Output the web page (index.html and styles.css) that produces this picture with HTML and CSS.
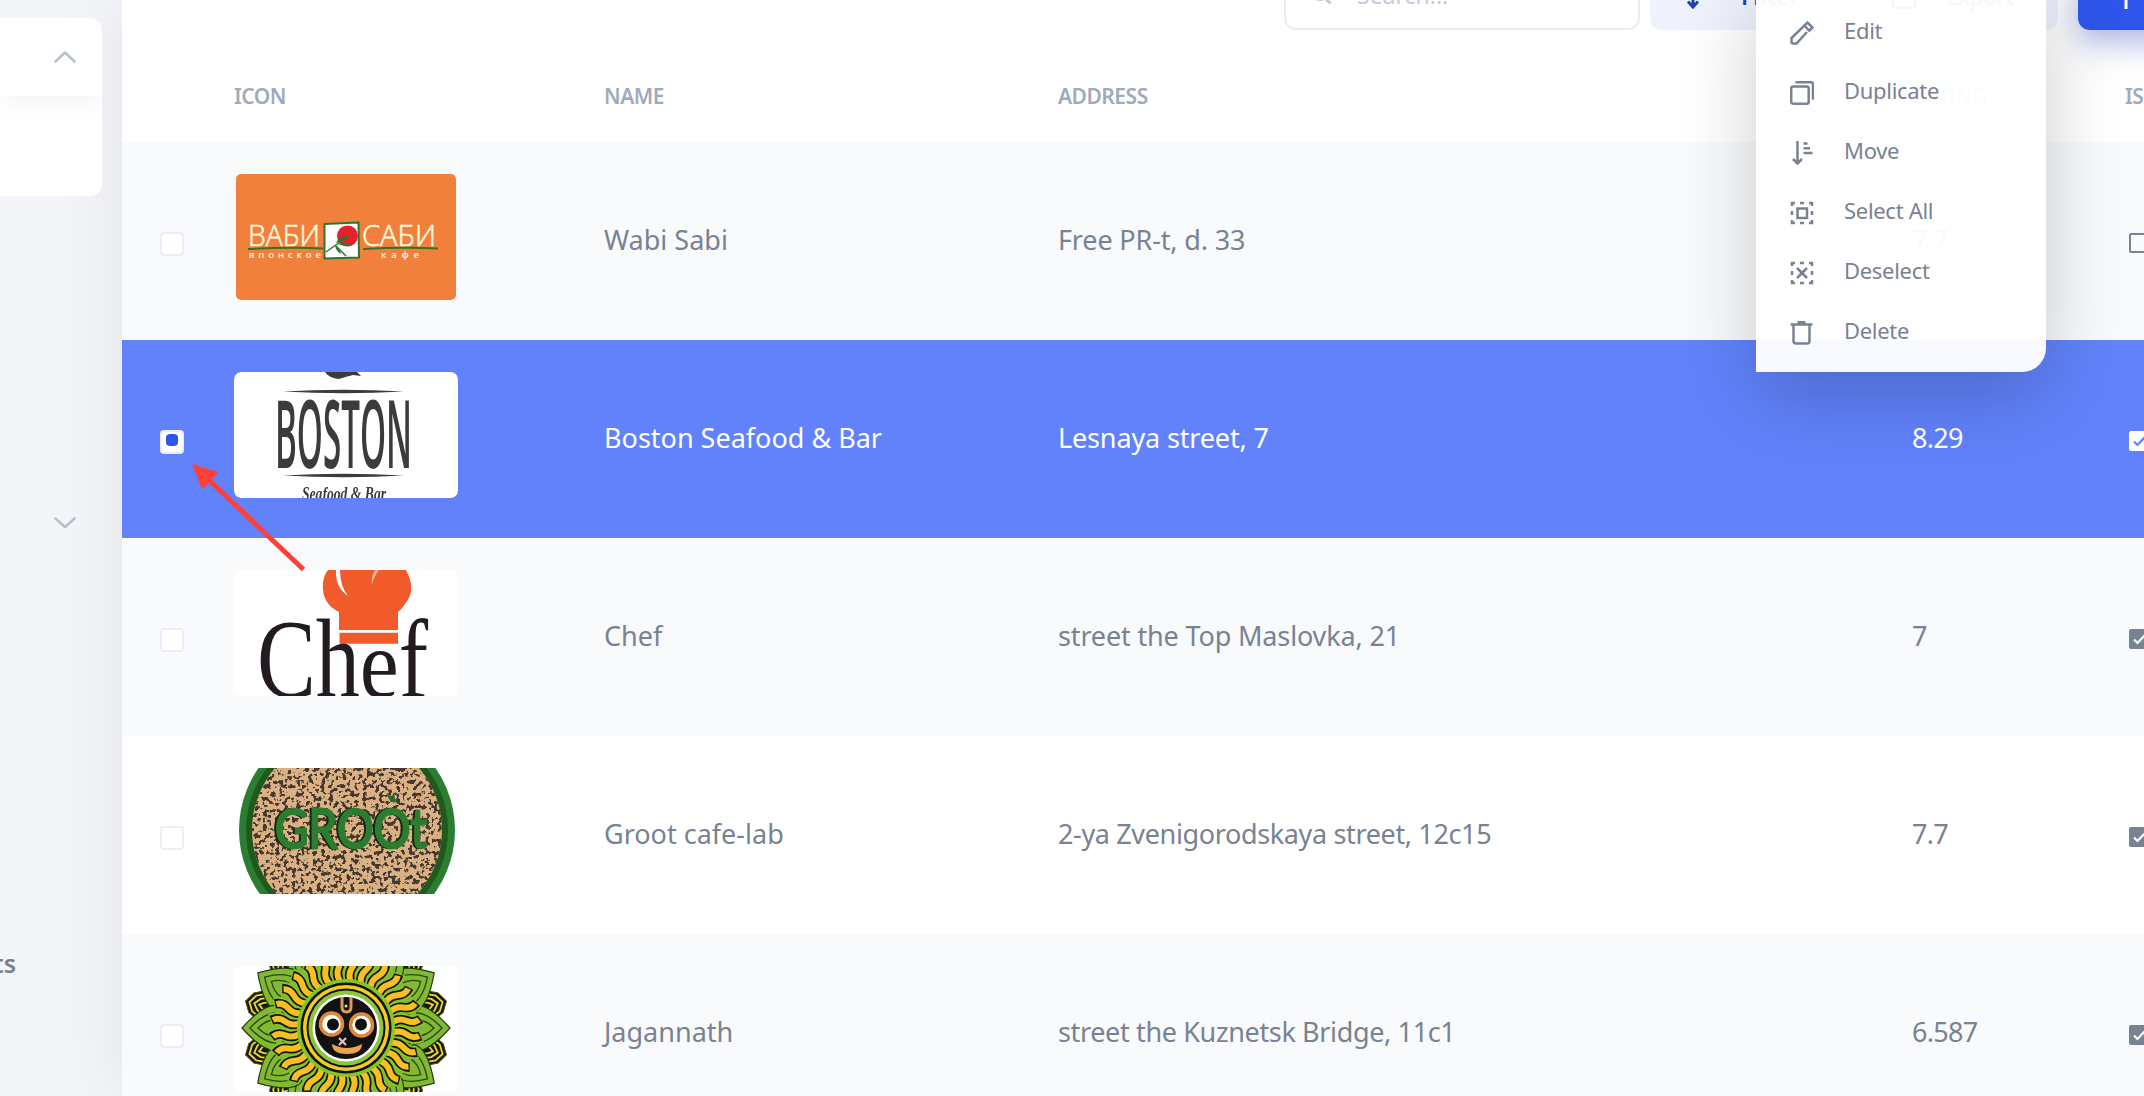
FILE: index.html
```html
<!DOCTYPE html>
<html lang="en">
<head>
<meta charset="utf-8">
<title>Restaurants</title>
<link rel="stylesheet" href="styles.css">
</head>
<body>
<svg class="defs" width="0" height="0" aria-hidden="true">
  <defs>
    <symbol id="check" viewBox="0 0 20 20"><rect width="20" height="20" rx="2" fill="currentColor"/><path d="M5 10.5l3.5 3.5 7-7.500" fill="none" stroke="var(--tick)" stroke-width="2.200"/></symbol>
    <filter id="soft"><feGaussianBlur stdDeviation=".55"/></filter>
    <filter id="grain" x="0" y="0" width="100%" height="100%">
      <feTurbulence type="fractalNoise" baseFrequency=".24" numOctaves="2" seed="8"/>
      <feColorMatrix values="0 0 0 0 .06  0 0 0 0 .04  0 0 0 0 .03  14 0 0 0 -7.300"/>
    </filter>
    <g id="leaf">
      <path d="M66-22Q80-27 104 0Q80 27 66 22L58 0z" fill="#84b832" stroke="#1e3d12" stroke-width="1.200"/>
      <path d="M70-15Q82-15 96 0Q82 15 70 15M72-8Q80-8 88 0Q80 8 72 8" fill="none" stroke="#1f4a14" stroke-width="1.300"/>
    </g>
    <g id="spike">
      <path d="M78-20L98-10L104 0L98 10L78 20z" fill="#161616" stroke="#4d4a10"/>
      <path d="M78-16L95-8L100 0L95 8L78 16M78-11L90-6L95 0L90 6L78 11M78-6L86-3L90 0L86 3L78 6" fill="none" stroke="#e8dc2c" stroke-width="1.800"/>
    </g>
    <g id="ray">
      <path d="M47 0Q54-4 61 0T76 0" fill="none" stroke="#86c42c" stroke-width="13"/>
      <path d="M47 0Q54-4 61 0T75 0" fill="none" stroke="#15170d" stroke-width="9.500"/>
      <path d="M47-.3Q54-4 61 0T73.500 .2" fill="none" stroke="#f8be22" stroke-width="6"/>
    </g>
  </defs>
</svg>

<div class="app">
  <aside class="sidebar">
    <section class="group">
      <div class="group-head"><svg width="22" height="12" viewBox="0 0 22 12"><path d="M1.500 10.500L11 1.500l9.500 9"/></svg></div>
    </section>
    <div class="group-closed"><svg width="22" height="12" viewBox="0 0 22 12"><path d="M1.500 1.500L11 10l9.500-8.500"/></svg></div>
    <div class="side-link">Restaurants</div>
  </aside>

  <main class="main">
    <header class="toolbar">
      <h1 class="title">Selected: 2 of 33</h1>
      <div class="search"><svg width="20" height="20" viewBox="0 0 20 20"><circle cx="8" cy="8" r="6.500"/><path d="M13 13l5.500 5.500"/></svg>Search...</div>
      <div class="btn filter"><svg width="14" height="26" viewBox="0 0 14 26"><path d="M7 0v24M2 18.500l5 5.500 5-5.500"/></svg>Filter</div>
      <div class="btn export"><svg width="26" height="26" viewBox="0 0 26 26"><rect x="1.500" y="1.500" width="23" height="23" rx="2"/></svg>Export</div>
      <div class="add"><svg width="22" height="22" viewBox="0 0 22 22"><path d="M11 0v22M0 11h22"/></svg></div>
    </header>

    <div class="row head"><span></span><span>ICON</span><span>NAME</span><span>ADDRESS</span><span>RATING</span><span>IS OPEN</span></div>

    <div class="row odd">
      <i class="box"></i>
      <svg class="thumb" viewBox="0 0 224 126">
        <rect x="2" width="220" height="126" rx="5" fill="#f0803b"/>
        <g fill="#fff6dc" font-family="Open Sans, sans-serif">
          <text x="14" y="72" font-size="29" font-weight="300" stroke="#fff6dc" stroke-width=".6" textLength="72" lengthAdjust="spacingAndGlyphs">ВАБИ</text>
          <text x="128" y="72" font-size="29" font-weight="300" stroke="#fff6dc" stroke-width=".6" textLength="74" lengthAdjust="spacingAndGlyphs">САБИ</text>
          <text x="15" y="83.500" font-size="9.500" font-weight="600" textLength="72">японское</text>
          <text x="147" y="83.500" font-size="9.500" font-weight="600" textLength="38">кафе</text>
        </g>
        <path d="M14 75q40-2 75-.5M129 75q40-2 75-.5" fill="none" stroke="#39702b" stroke-width="2"/>
        <path d="M90.500 50l34-1.500.5 35-34.500 1z" fill="#fff" stroke="#2f742f" stroke-width="2"/>
        <circle cx="113.500" cy="62" r="10.500" fill="#e8202c"/>
        <path d="M92 78L106 68M102 72l10 10" fill="none" stroke="#2f742f" stroke-width="1.500"/>
        <path d="M102 69q3-7 14-8-4 6-14 8zM104 70q6-3 14 0-7 3-14 0zM101 72q5 3 6 8-5-3-6-8z" fill="#2f742f"/>
      </svg>
      <span>Wabi Sabi</span><span class="address">Free PR-t, d. 33</span><span class="rating">7.7</span><i class="flag-empty"></i>
    </div>

    <div class="row selected">
      <i class="box"></i>
      <svg class="thumb" viewBox="0 0 224 126">
        <rect width="224" height="126" rx="7" fill="#fff"/>
        <g fill="#3b3b3b" filter="url(#soft)">
          <path d="M91 0h32l4 4-8-1q-8 2-14 4-10-1-14-7z"/>
          <path d="M49 19.500q60-3.500 121 0-60 3.500-121 0zM49 103.500q60-3.500 121 0-60 3.500-121 0z"/>
          <text x="0" y="0" transform="translate(41 96) scale(.445 1)" font-family="Open Sans, sans-serif" font-size="95" font-weight="600" textLength="308" lengthAdjust="spacingAndGlyphs">BOSTON</text>
          <text x="68" y="128" font-family="Liberation Serif, serif" font-size="19" font-style="italic" font-weight="700" textLength="84" lengthAdjust="spacingAndGlyphs">Seafood &amp; Bar</text>
        </g>
      </svg>
      <span>Boston Seafood &amp; Bar</span><span class="address">Lesnaya street, 7</span><span class="rating">8.29</span><svg class="flag" width="20" height="20"><use href="#check"/></svg>
    </div>

    <div class="row odd">
      <i class="box"></i>
      <svg class="thumb" viewBox="0 0 224 126">
        <rect width="224" height="126" rx="7" fill="#fff"/>
        <g filter="url(#soft)">
          <path d="M94 0h78q11 20-1 34-3 5-7 8v18h-59V42Q87 33 89 13q1-8 5-13z" fill="#f15a2c"/>
          <path d="M105.500 62.700h58.500v11h-58.500z" fill="#f15a2c"/>
          <path d="M102 0q-1 17 12 26Q106 16 106 0z" fill="#fff"/>
          <path d="M138 15q-1-9 3-15h4q-5 6-7 15z" fill="#f9b59a"/>
          <text transform="translate(23 127) scale(.78 1)" font-family="Liberation Serif, serif" font-size="113" fill="#231f20">Ch<tspan font-size="97" textLength="50" lengthAdjust="spacingAndGlyphs">e</tspan>f</text>
        </g>
      </svg>
      <span>Chef</span><span class="address">street the Top Maslovka, 21</span><span class="rating">7</span><svg class="flag" width="20" height="20"><use href="#check"/></svg>
    </div>

    <div class="row">
      <i class="box"></i>
      <svg class="thumb" viewBox="0 0 224 126">
        <defs><clipPath id="disc"><circle cx="113" cy="62" r="95"/></clipPath></defs>
        <circle cx="113" cy="62" r="108" fill="#2b7d31"/>
        <circle cx="113" cy="62" r="101" fill="#1f5a1d"/>
        <circle cx="113" cy="62" r="95" fill="#dbb184"/>
        <g clip-path="url(#disc)"><rect width="224" height="126" filter="url(#grain)"/></g>
        <g font-family="Lato, sans-serif" font-size="54" font-weight="400" stroke-width="2.500">
          <text x="39" y="80" fill="#17280f" stroke="#17280f" textLength="152" lengthAdjust="spacingAndGlyphs">GROOt</text>
          <text x="41" y="80" fill="#2b7d31" stroke="#2b7d31" textLength="152" lengthAdjust="spacingAndGlyphs">GROOt</text>
        </g>
        <path d="M152 26l6 2 2-4 1 8 5 3-9-1z" fill="#256b29"/>
      </svg>
      <span>Groot cafe-lab</span><span class="address long">2-ya Zvenigorodskaya street, 12c15</span><span class="rating">7.7</span><svg class="flag" width="20" height="20"><use href="#check"/></svg>
    </div>

    <div class="row odd">
      <i class="box"></i>
      <svg class="thumb" viewBox="0 0 224 126">
        <rect width="224" height="126" rx="7" fill="#fff"/>
        <g transform="translate(112 62)">
          <circle r="84" fill="#171a12"/>
          <g><use href="#spike" transform="rotate(15)"/><use href="#spike" transform="rotate(-15)"/><use href="#spike" transform="rotate(45)"/><use href="#spike" transform="rotate(-45)"/><use href="#spike" transform="rotate(135)"/><use href="#spike" transform="rotate(-135)"/><use href="#spike" transform="rotate(165)"/><use href="#spike" transform="rotate(-165)"/></g>
          <g><use href="#leaf"/><use href="#leaf" transform="rotate(32)"/><use href="#leaf" transform="rotate(-32)"/><use href="#leaf" transform="rotate(60)"/><use href="#leaf" transform="rotate(-60)"/><use href="#leaf" transform="rotate(120)"/><use href="#leaf" transform="rotate(-120)"/><use href="#leaf" transform="rotate(148)"/><use href="#leaf" transform="rotate(-148)"/><use href="#leaf" transform="rotate(180)"/></g>
          <g id="quarter"><use href="#ray" transform="rotate(6)"/><use href="#ray" transform="rotate(18.860)"/><use href="#ray" transform="rotate(31.710)"/><use href="#ray" transform="rotate(44.570)"/><use href="#ray" transform="rotate(57.430)"/><use href="#ray" transform="rotate(70.290)"/><use href="#ray" transform="rotate(83.140)"/></g>
          <use href="#quarter" transform="rotate(90)"/><use href="#quarter" transform="rotate(180)"/><use href="#quarter" transform="rotate(270)"/>
          <circle r="49" fill="#86c42c"/><circle r="45.500" fill="#111"/><circle r="43" fill="#f3cb22"/><circle r="39.500" fill="#111"/><circle r="37.500" fill="#8cc63a"/><circle r="33.500" fill="#fff"/><circle r="31" fill="#121212"/>
          <path d="M-4-31v10q0 5 4.500 5t4.500-5v-10" fill="none" stroke="#dc9a58" stroke-width="3"/>
          <circle cy="-22" r="1.500" fill="#e5e65c"/>
          <g fill="#fff" stroke="#e0883a" stroke-width="3.500"><circle cx="-14.500" cy="-4" r="11"/><circle cx="15.500" cy="-3" r="11"/></g>
          <circle cx="-13" cy="-3.500" r="6" fill="#111"/><circle cx="15" cy="-3.500" r="6" fill="#111"/>
          <path d="M-7 10l7 7m0-7l-7 7" stroke="#e9c8c0" stroke-width="2"/>
          <path d="M-14 16q15 8 30 0 0 10-15 10T-14 16z" fill="#eda34e"/>
        </g>
      </svg>
      <span>Jagannath</span><span class="address long">street the Kuznetsk Bridge, 11c1</span><span class="rating">6.587</span><svg class="flag" width="20" height="20"><use href="#check"/></svg>
    </div>
  </main>
</div>

<nav class="menu">
  <div class="item"><svg viewBox="0 0 24 24"><path d="M1.500 22.500V17L17.500 1.500l5 5-4 4M14.500 4.500l4.500 5M17 11L6.500 22.500h-5"/></svg>Edit</div>
  <div class="item"><svg viewBox="0 0 24 24"><rect x="1.200" y="5.500" width="17.500" height="17.200" rx="2"/><path d="M5.500 1.200H21a2 2 0 0 1 2 2v15.500"/></svg>Duplicate</div>
  <div class="item"><svg viewBox="0 0 24 24"><path d="M7.500 0v22M3 18l4.500 4.500L12 18M13.500 2.500h4M13.500 7.200h6.500M13.500 12h9"/></svg>Move</div>
  <div class="item"><svg viewBox="0 0 24 24"><path d="M2 5V2h3M10 2h4M19 2h3v3M22 10v4M22 19v3h-3M14 22h-4M5 22H2v-3M2 14v-4"/><path d="M7.500 7.500h9.500v9.500H7.500z"/></svg>Select All</div>
  <div class="item"><svg viewBox="0 0 24 24"><path d="M2 5V2h3M10 2h4M19 2h3v3M22 10v4M22 19v3h-3M14 22h-4M5 22H2v-3M2 14v-4"/><path d="M7 7l10 10M17 7L7 17"/></svg>Deselect</div>
  <div class="item"><svg viewBox="0 0 24 24"><path d="M.5 3.500h22M7.500 1.300h8M3.500 3.500V20a2.500 2.500 0 0 0 2.500 2.500h11a2.500 2.500 0 0 0 2.500-2.500V3.500"/></svg>Delete</div>
</nav>

<svg class="arrow" width="120" height="112" viewBox="0 0 120 112"><path d="M112.500 106.500L18 17" stroke="#fe4138" stroke-width="5"/><path d="M1 1l26.500 8L11 26.500z" fill="#fe4138"/></svg>
</body>
</html>
```
FILE: styles.css
```css
* { box-sizing: border-box; }
body {
  margin: 0;
  width: 2144px;
  height: 1096px;
  overflow: hidden;
  position: relative;
  font-family: "Noto Sans", sans-serif;
  color: #788292;
}
.defs { position: absolute; }
.app { display: flex; height: 1096px; overflow: hidden; }

.sidebar { width: 122px; flex: none; background: #f3f5f9; padding-top: 18px; }
.sidebar svg { display: block; fill: none; stroke: #b6c0ce; stroke-width: 2.6; stroke-linecap: round; stroke-linejoin: round; }
.group { width: 102px; height: 178px; background: #fff; border-radius: 0 12px 12px 0; overflow: hidden; position: relative; z-index: 1; }
.group-head { height: 78px; padding: 33px 0 0 54px; box-shadow: 0 6px 24px rgba(0, 0, 0, .05); }
.group-closed { padding: 321px 0 0 54px; }
.side-link {
  margin-top: 416px;
  width: 16px;
  display: flex;
  justify-content: flex-end;
  font-size: 25px;
  line-height: 36px;
  font-weight: 600;
}

.main { width: 2022px; flex: none; background: #fff; box-shadow: 0 0 72px rgba(20, 20, 30, .08); position: relative; }
.toolbar { display: flex; height: 64px; margin-top: -34px; padding-left: 92px; font-size: 23px; }
.title {
  margin: -3px 0 0;
  padding-left: 3px;
  width: 1070px;
  flex: none;
  font-size: 24px;
  line-height: 50px;
  font-weight: 500;
  color: #333;
}
.toolbar svg { fill: none; stroke: currentColor; stroke-width: 3; flex: none; }
.search {
  width: 356px;
  flex: none;
  display: flex;
  align-items: center;
  gap: 25px;
  padding: 0 0 7px 26px;
  border: 2px solid #e9edf6;
  border-radius: 12px;
  color: #c3cad8;
}
.btn { flex: none; display: flex; align-items: center; background: #eff2fc; color: #2441b4; font-weight: 600; border-radius: 12px; padding-bottom: 5px; }
.filter { margin-left: 10px; width: 185px; padding-left: 36px; gap: 41px; }
.export { margin-left: 20px; width: 203px; padding-left: 36px; gap: 29px; letter-spacing: -1px; }
.add {
  flex: none;
  margin-left: 20px;
  width: 200px;
  padding: 18px 0 0 37px;
  border-radius: 12px;
  background: #2e55ea;
  color: #fff;
  box-shadow: 0 12px 32px rgba(46, 65, 180, .4);
}

.row {
  display: grid;
  grid-template-columns: 74px 370px 454px 854px 213px 60px;
  align-items: center;
  height: 198px;
  padding-left: 38px;
  font-size: 27px;
  white-space: nowrap;
}
.row > span { padding-bottom: 4px; }
.row > .address { letter-spacing: -.15px; }
.row > .long { letter-spacing: -.36px; }
.row > .rating { letter-spacing: -.7px; }
.head { height: 112px; font-size: 21px; font-weight: 600; letter-spacing: -.5px; color: #a0aabd; }
.row.head > span { padding: 0; margin-top: 20px; }
.odd { background: #f9fafc; }
.selected { background: #6182fb; color: #fff; }
.box { width: 24px; height: 24px; margin-top: 6px; background: #fff; border: 2px solid #eceef7; border-radius: 4px; display: flex; justify-content: center; padding-top: 2px; }
.selected .box::after { content: ""; width: 12px; height: 12px; border-radius: 4px; background: #2e55ea; }
.thumb { width: 224px; height: 126px; align-self: start; margin-top: 32px; border-radius: 7px; overflow: hidden; }
.flag, .flag-empty { width: 20px; height: 20px; margin: 4px 0 0 4px; }
.flag { --tick: #fff; }
.flag-empty { border: 2px solid #788292; border-radius: 2px; }
.selected .flag { --tick: #6182fb; }

.menu {
  position: absolute;
  left: 1756px;
  top: -20px;
  width: 290px;
  height: 392px;
  padding-top: 20px;
  background: rgba(255, 255, 255, .96);
  border-radius: 0 0 24px 0;
  box-shadow: 0 24px 80px rgba(0, 0, 0, .2);
  font-size: 22px;
}
.item { display: flex; align-items: center; height: 60px; padding-left: 34px; gap: 30px; line-height: 58px; padding-bottom: 1px; letter-spacing: -.3px; }
.item svg { width: 24px; height: 24px; margin-top: 7px; fill: none; stroke: #788292; stroke-width: 2.5; }

.arrow { position: absolute; left: 191px; top: 463px; }
```
